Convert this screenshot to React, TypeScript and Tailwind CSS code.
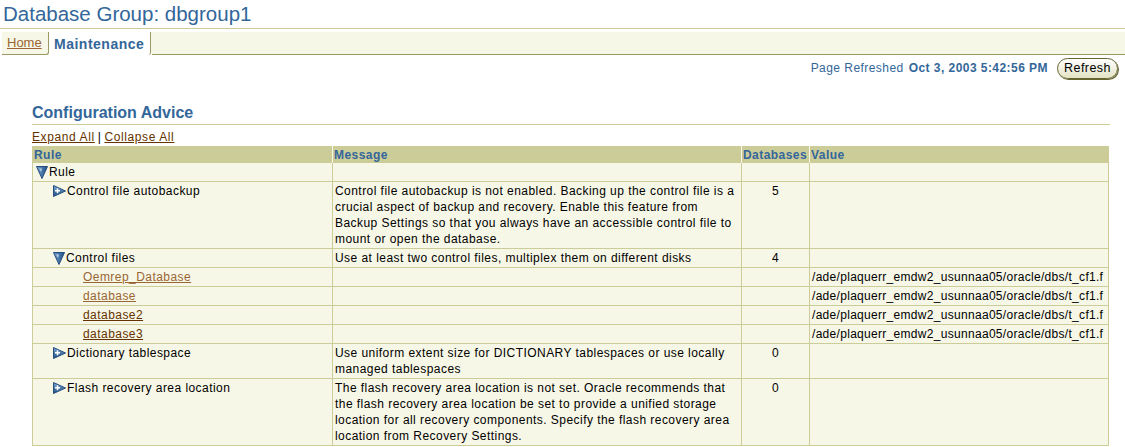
import React from "react";

const F = "font-['Liberation_Sans',Arial,sans-serif]";

function DownIcon() {
  return (
    <svg width="12" height="13" viewBox="0 0 12 13" className="inline-block shrink-0">
      <defs>
        <linearGradient id="dg" x1="0" y1="0" x2="1" y2="0">
          <stop offset="0" stopColor="#6f9fd0" />
          <stop offset="1" stopColor="#1f4f86" />
        </linearGradient>
      </defs>
      <polygon points="0.5,0.5 11.5,0.5 6,12.5" fill="url(#dg)" stroke="#274d7a" strokeWidth="1" />
      <polygon points="3,2.5 6,2.5 5,6" fill="#ffffff" opacity="0.6" />
    </svg>
  );
}

function RightIcon() {
  return (
    <svg width="13" height="12" viewBox="0 0 13 12" className="inline-block shrink-0">
      <defs>
        <linearGradient id="rg" x1="0" y1="0" x2="0" y2="1">
          <stop offset="0" stopColor="#7aa7d6" />
          <stop offset="1" stopColor="#1f4f86" />
        </linearGradient>
      </defs>
      <polygon points="0.5,0.5 12.5,6 0.5,11.5" fill="url(#rg)" stroke="#274d7a" strokeWidth="1" />
      <rect x="2" y="5" width="5" height="1.5" fill="#ffffff" />
      <rect x="3.75" y="3.25" width="1.5" height="5" fill="#ffffff" />
    </svg>
  );
}

type Row = {
  level: number;
  kind: "down" | "right" | "link";
  label: string;
  linkColor?: string;
  message?: React.ReactNode;
  dbs?: string;
  value?: string;
};

const path = "/ade/plaquerr_emdw2_usunnaa05/oracle/dbs/t_cf1.f";

const rows: Row[] = [
  { level: 0, kind: "down", label: "Rule" },
  {
    level: 1,
    kind: "right",
    label: "Control file autobackup",
    message: (
      <>
        Control file autobackup is not enabled. Backing up the control file is a
        <br />
        crucial aspect of backup and recovery. Enable this feature from
        <br />
        Backup Settings so that you always have an accessible control file to
        <br />
        mount or open the database.
      </>
    ),
    dbs: "5",
  },
  {
    level: 1,
    kind: "down",
    label: "Control files",
    message: "Use at least two control files, multiplex them on different disks",
    dbs: "4",
  },
  { level: 2, kind: "link", label: "Oemrep_Database", linkColor: "text-[#996633] decoration-[#996633]", value: path },
  { level: 2, kind: "link", label: "database", linkColor: "text-[#996633] decoration-[#996633]", value: path },
  { level: 2, kind: "link", label: "database2", linkColor: "text-[#663300] decoration-[#663300]", value: path },
  { level: 2, kind: "link", label: "database3", linkColor: "text-[#663300] decoration-[#663300]", value: path },
  {
    level: 1,
    kind: "right",
    label: "Dictionary tablespace",
    message: (
      <>
        Use uniform extent size for DICTIONARY tablespaces or use locally
        <br />
        managed tablespaces
      </>
    ),
    dbs: "0",
  },
  {
    level: 1,
    kind: "right",
    label: "Flash recovery area location",
    message: (
      <>
        The flash recovery area location is not set. Oracle recommends that
        <br />
        the flash recovery area location be set to provide a unified storage
        <br />
        location for all recovery components. Specify the flash recovery area
        <br />
        location from Recovery Settings.
      </>
    ),
    dbs: "0",
  },
];

const cell = "border-r border-b border-[#cccc99] align-top px-[2px] pt-[1px] pb-[1px] leading-[16px] text-[12px]";

export default function App() {
  return (
    <div className={`${F} w-[1125px] h-[447px] bg-white overflow-hidden text-black tracking-[0.45px]`}>
      <div className="h-[29px] px-[3px] pt-[1px] text-[20.5px] leading-[26px] tracking-normal text-[#336699] border-b border-[#cccc99]">
        Database Group: dbgroup1
      </div>
      <div className="mt-[3px] ml-[2px] h-[23px] flex items-stretch bg-[#f7f7e7]">
        <div className="flex items-center pl-[5px] pr-[6px] border-b border-r border-[#999966] rounded-br-[3px]">
          <span className="text-[13px] tracking-normal text-[#996633] underline decoration-[#996633] leading-[16px]">Home</span>
        </div>
        <div className="flex items-center bg-white border-r border-[#999966] rounded-br-[3px] w-[102px] justify-center">
          <span className="text-[14px] font-bold text-[#336699] leading-[16px] tracking-[0.5px]">Maintenance</span>
        </div>
        <div className="flex-1 border-b border-[#999966] ml-[1px]" />
      </div>
      <div className="flex justify-end items-center mt-[2px] pr-[7px] h-[22px]">
        <span className="text-[12px] text-[#336699]">Page Refreshed</span>
        <span className="text-[12px] text-[#336699] font-bold ml-[5px]">Oct 3, 2003 5:42:56 PM</span>
        <button className="ml-[9px] h-[21px] w-[61px] rounded-full border border-[#666633] bg-gradient-to-b from-[#ffffff] to-[#e3e3c4] text-[12.5px] leading-[14px] text-black shadow-[1px_1px_0_#666633]">
          Refresh
        </button>
      </div>
      <div className="ml-[32px] w-[1078px] mt-[24px]">
        <div className="text-[16px] font-bold tracking-normal text-[#336699] leading-[20px] pb-[1px] border-b border-[#cccc99]">
          Configuration Advice
        </div>
        <div className="mt-[5px] text-[12px] leading-[15px] h-[16px] tracking-[0.6px]">
          <span className="text-[#663300] underline decoration-[#663300]">Expand All</span>
          <span className="mx-[3px] text-black">|</span>
          <span className="text-[#663300] underline decoration-[#663300]">Collapse All</span>
        </div>
        <table className="table-fixed border-collapse border-l border-[#cccc99]" style={{ width: 1076 }}>
          <colgroup>
            <col className="w-[300px]" />
            <col className="w-[409px]" />
            <col className="w-[68px]" />
            <col className="w-[299px]" />
          </colgroup>
          <thead>
            <tr className="bg-[#cccc99] h-[17px]">
              {["Rule", "Message", "Databases", "Value"].map((h, i) => (
                <th
                  key={h}
                  className={`text-left px-[1px] text-[12px] leading-[16px] font-bold text-[#336699] whitespace-nowrap overflow-hidden ${i < 3 ? "border-r border-[#f7f7e7]" : ""}`}
                >
                  {h}
                </th>
              ))}
            </tr>
          </thead>
          <tbody>
            {rows.map((r, idx) => (
              <tr key={idx} className="bg-[#f7f7e7]">
                <td className={cell}>
                  <div
                    className={`flex items-center h-[16px] ${r.level === 0 ? "pl-[1px]" : r.level === 1 ? "pl-[18px]" : "pl-[48px]"}`}
                  >
                    {r.kind === "down" && <DownIcon />}
                    {r.kind === "right" && <RightIcon />}
                    {r.kind === "link" ? (
                      <span className={`underline ${r.linkColor}`}>{r.label}</span>
                    ) : (
                      <span className="ml-[1px]">{r.label}</span>
                    )}
                  </div>
                </td>
                <td className={`${cell} whitespace-nowrap`}>{r.message ?? "\u00a0"}</td>
                <td className={`${cell} text-center`}>{r.dbs ?? ""}</td>
                <td className={`${cell} whitespace-nowrap overflow-hidden tracking-[0.3px]`}>{r.value ?? ""}</td>
              </tr>
            ))}
          </tbody>
        </table>
      </div>
    </div>
  );
}
